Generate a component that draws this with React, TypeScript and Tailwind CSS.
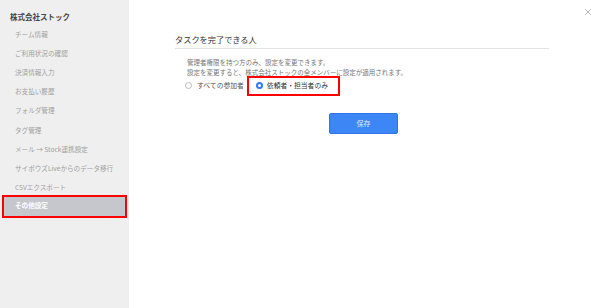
import { X } from 'lucide-react';

const menu = [
  'チーム情報',
  'ご利用状況の確認',
  '決済情報入力',
  'お支払い履歴',
  'フォルダ管理',
  'タグ管理',
  'メール → Stock連携設定',
  'サイボウズLiveからのデータ移行',
  'CSVエクスポート',
];

const font = { fontFamily: '"Noto Sans CJK JP", "Noto Sans", sans-serif' };

export default function App() {
  return (
    <div className="flex h-[308px] w-[600px] bg-white" style={font}>
      {/* Sidebar */}
      <aside className="w-[129px] shrink-0 bg-[#efefef] pt-[11px]">
        <h2 className="mb-[2.5px] pl-[10px] text-[7.5px] font-bold leading-[12px] text-[#444]">株式会社ストック</h2>
        <ul>
          {menu.map((item) => (
            <li key={item} className="flex h-[19.1px] items-center pl-[15px] text-[6.6px] text-[#a0a0a0]">
              {item}
            </li>
          ))}
          <li className="mx-[2px] -mt-[2.5px] border-2 border-[#ff0000]">
            <div className="flex h-[19px] items-center bg-[#c6c7cd] pl-[11px] text-[6.6px] font-bold text-white">
              その他設定
            </div>
          </li>
        </ul>
      </aside>

      {/* Main */}
      <main className="relative flex-1">
        <button className="absolute right-[7px] top-[7px] text-[#888]">
          <X className="h-[10px] w-[10px]" strokeWidth={1.5} />
        </button>
        <div className="ml-[46px] mr-[51px] pt-[34px]">
          <h1 className="border-b border-[#e3e3e3] pb-[3px] text-[8.2px] leading-[11px] text-[#333]">
            タスクを完了できる人
          </h1>
          <div className="pl-[12px] pt-[9px] text-[6.5px] leading-[9.5px] text-[#777]">
            <p>管理者権限を持つ方のみ、設定を変更できます。</p>
            <p>設定を変更すると、株式会社ストックの全メンバーに設定が適用されます。</p>
          </div>
          <div className="-mt-[1.5px] flex items-center pl-[10px]">
            <label className="flex items-center gap-[5px] text-[6.8px] text-[#555]">
              <span className="h-[7px] w-[7px] rounded-full border border-[#bbb] bg-white" />
              すべての参加者
            </label>
            <div className="ml-[3px] flex h-[20px] w-[93px] items-center border-2 border-[#ff0000] pl-[7px]">
              <label className="flex items-center gap-[4px] text-[6.8px] text-[#333]">
                <span className="flex h-[7px] w-[7px] items-center justify-center rounded-full bg-[#2f7cf6]">
                  <span className="h-[3px] w-[3px] rounded-full bg-white" />
                </span>
                依頼者・担当者のみ
              </label>
            </div>
          </div>
          <div className="mt-[17px] flex justify-center pl-[3px]">
            <button className="flex h-[21px] w-[69px] items-center justify-center rounded-[2px] border border-[#2d74e8] bg-[#3d86f5] text-[7px] text-[#dde8fb]">
              保存
            </button>
          </div>
        </div>
      </main>
    </div>
  );
}
